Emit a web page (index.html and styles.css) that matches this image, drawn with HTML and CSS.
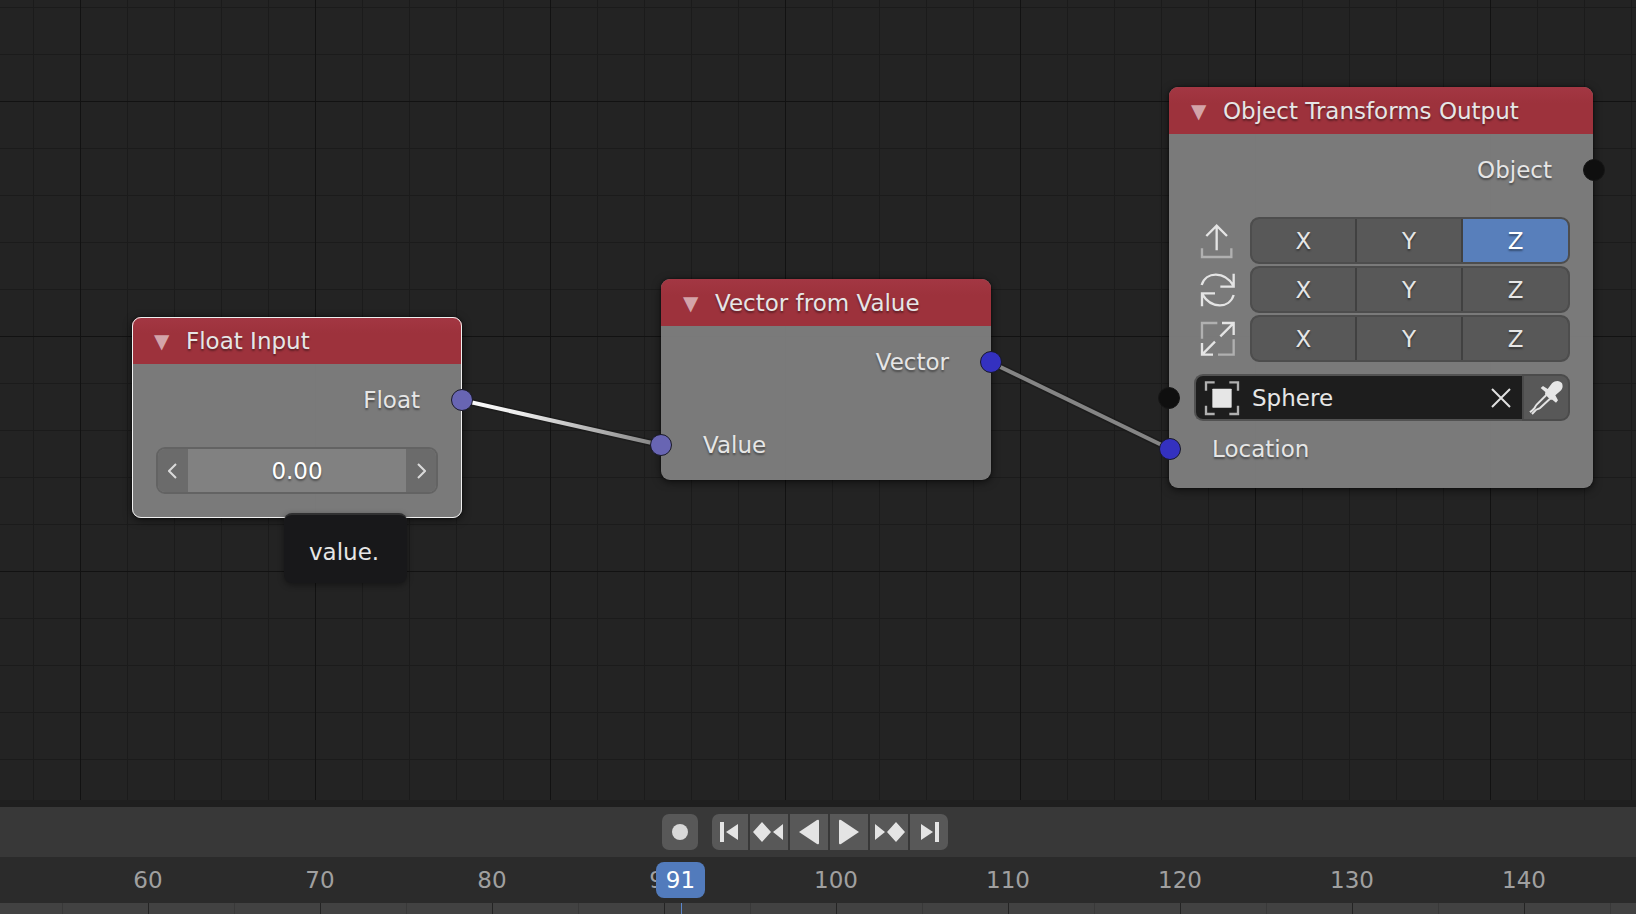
FILE: index.html
```html
<!DOCTYPE html>
<html lang="en">
<head>
<meta charset="utf-8">
<title>Node Editor</title>
<link rel="stylesheet" href="styles.css">
</head>
<body>
<main class="canvas">
  <svg class="links" aria-hidden="true">
    <defs>
      <linearGradient id="active" gradientUnits="userSpaceOnUse" x1="461" y1="400" x2="661" y2="445">
        <stop offset="0" stop-color="#fff"/><stop offset=".3" stop-color="#ececec"/><stop offset="1" stop-color="#808080"/>
      </linearGradient>
    </defs>
    <path class="link-edge" d="M461 400L661 445M990 362L1170 449"/>
    <path class="link" stroke="url(#active)" d="M461 400L661 445"/>
    <path class="link link-idle" d="M990 362L1170 449"/>
  </svg>

  <section class="node node-float selected">
    <h2 class="node-header"><span class="collapse">▼</span>Float Input</h2>
    <div class="node-body">
      <div class="socket-row output"><label for="float-value">Float</label><span class="socket float"></span></div>
      <div class="number-field">
        <button class="step" aria-label="Decrease"><svg viewBox="0 0 10 16"><path d="M8 1L1 8L8 15"/></svg></button>
        <input id="float-value" class="number" type="text" value="0.00">
        <button class="step" aria-label="Increase"><svg viewBox="0 0 10 16"><path d="M2 1L9 8L2 15"/></svg></button>
      </div>
    </div>
  </section>

  <section class="node node-vector">
    <h2 class="node-header"><span class="collapse">▼</span>Vector from Value</h2>
    <div class="node-body">
      <div class="socket-row output">Vector<span class="socket vector"></span></div>
      <div class="socket-row input">Value<span class="socket float"></span></div>
    </div>
  </section>

  <section class="node node-output">
    <h2 class="node-header"><span class="collapse">▼</span>Object Transforms Output</h2>
    <div class="node-body">
      <div class="socket-row output">Object<span class="socket object"></span></div>
      <div class="channels">
        <div class="channel">
          <svg class="icon" viewBox="60 52 108 108"><path class="dim" d="M66 128V154H154V128"/><path d="M110 134V60M79 91L110 60L141 91"/></svg>
          <div class="axes"><button>X</button><button>Y</button><button class="on">Z</button></div>
        </div>
        <div class="channel">
          <svg class="icon" viewBox="60 199 108 108"><path d="M65 238C78 197 134 196 160 240M161 204V243H121M66 302V263H105M67 266C93 309 148 310 161 268"/></svg>
          <div class="axes"><button>X</button><button>Y</button><button>Z</button></div>
        </div>
        <div class="channel">
          <svg class="icon" viewBox="60 346 108 108"><path class="dim" d="M66 399V352H112M161 401V447H114"/><path d="M121 392L160 353M126 352H161V388M105 408L67 446M66 412V447H99"/></svg>
          <div class="axes"><button>X</button><button>Y</button><button>Z</button></div>
        </div>
      </div>
      <div class="object-row">
        <span class="socket object"></span>
        <div class="object-field">
          <svg class="icon" viewBox="163 328 108 108"><path class="dim" d="M169 360V335H195M239 335H265V360M265 405V430H239M195 430H169V405"/><rect x="188" y="354" width="58" height="57" rx="2"/></svg>
          <input class="object-name" type="text" value="Sphere" aria-label="Object">
          <button class="clear" aria-label="Clear"><svg viewBox="0 0 20 20"><path d="M1 1L19 19M19 1L1 19"/></svg></button>
        </div>
        <button class="picker" aria-label="Pick object">
          <svg class="icon" viewBox="84 58 108 108"><path class="solid" d="M122 82L129 76L143 85L156 68C167 57 181 60 186 68C190 78 187 85 180 92L166 104L174 119L168 126L157 117L151 117L135 101L136 94Z"/><path class="thin" d="M139 103L110 132C104 138 107 141 99 147L90 155M150 114L120 142C114 147 109 144 105 151L96 160"/></svg>
        </button>
      </div>
      <div class="socket-row input">Location<span class="socket vector"></span></div>
    </div>
  </section>

  <div class="tooltip" role="tooltip">value.</div>
</main>

<footer class="timeline">
  <div class="transport">
    <button class="record" aria-label="Auto keying"><svg viewBox="0 0 36 36"><circle cx="18" cy="18" r="8"/></svg></button>
    <div class="playback">
      <button aria-label="Jump to start"><svg viewBox="0 0 36 36"><path d="M8 8h4v20h-4zM14 18L26 10V26Z"/></svg></button>
      <button aria-label="Previous keyframe"><svg viewBox="0 0 36 36"><path d="M2 18L11 8L20 18L11 28ZM22 18L32 10V26Z"/></svg></button>
      <button aria-label="Play reversed"><svg viewBox="0 0 36 36"><path d="M8 18L26 6Q28 5 28 7V29Q28 31 26 30Z"/></svg></button>
      <button aria-label="Play"><svg viewBox="0 0 36 36"><path d="M28 18L10 6Q8 5 8 7V29Q8 31 10 30Z"/></svg></button>
      <button aria-label="Next keyframe"><svg viewBox="0 0 36 36"><path d="M34 18L25 8L16 18L25 28ZM14 18L4 10V26Z"/></svg></button>
      <button aria-label="Jump to end"><svg viewBox="0 0 36 36"><path d="M24 8h4v20h-4zM22 18L10 10V26Z"/></svg></button>
    </div>
  </div>
  <div class="frames">
    <div class="ruler"><span>60</span><span>70</span><span>80</span><span>90</span><span>100</span><span>110</span><span>120</span><span>130</span><span>140</span></div>
    <div class="track"></div>
    <div class="playhead">91</div>
  </div>
</footer>
</body>
</html>
```
FILE: styles.css
```css
* { box-sizing: border-box; }

body {
  margin: 0;
  height: 100vh;
  display: flex;
  flex-direction: column;
  overflow: hidden;
  background: #1f1f1f;
  color: #e6e6e6;
  font: 23px/28px "DejaVu Sans", sans-serif;
}

button, input {
  margin: 0;
  padding: 0;
  border: 0;
  border-radius: 0;
  background: none;
  color: inherit;
  font: inherit;
  text-shadow: inherit;
}

svg { display: block; }

/* Node canvas */
.canvas {
  position: relative;
  flex: 1;
  overflow: hidden;
  background-color: #232323;
  background-image:
    linear-gradient(90deg, #121212 1px, transparent 1px),
    linear-gradient(#121212 1px, transparent 1px),
    linear-gradient(90deg, #1b1b1b 1px, transparent 1px),
    linear-gradient(#1b1b1b 1px, transparent 1px);
  background-size: 235px 235px, 235px 235px, 47px 47px, 47px 47px;
  background-position: 80px 0, 0 101px, 33px 0, 0 7px;
}

.links {
  position: absolute;
  inset: 0;
  width: 100%;
  height: 100%;
  z-index: 1;
  fill: none;
}
.link { stroke-width: 4; }
.link-idle { stroke: #858585; }
.link-edge { stroke: #151515; stroke-width: 7; stroke-opacity: .5; }

.node {
  position: absolute;
  border-radius: 9px;
  background: rgba(128, 128, 128, .95);
  box-shadow: 0 2px 8px rgba(0, 0, 0, .6), 0 0 2px rgba(0, 0, 0, .6);
  text-shadow: 0 2px 2px rgba(0, 0, 0, .4);
}
.node-float { left: 132px; top: 317px; width: 330px; }
.node-vector { left: 661px; top: 279px; width: 330px; }
.node-output { left: 1169px; top: 87px; width: 424px; }
.selected { outline: 1px solid #f0f0f0; outline-offset: -1px; }

.node-header {
  display: flex;
  align-items: center;
  height: 47px;
  margin: 0;
  padding: 1px 0 0 22px;
  border-radius: 9px 9px 0 0;
  background: linear-gradient(#a33743, #9d323c 16px);
  font-size: inherit;
  font-weight: normal;
}
.collapse {
  width: 32px;
  font-size: 20px;
  color: #d3a4a9;
  text-shadow: none;
}

.node-body {
  display: flex;
  flex-direction: column;
  padding: 12px 24px;
}
.node-vector .node-body { gap: 36px; }
.node-float .node-body { gap: 24px; padding-bottom: 24px; }
.node-output .node-body { padding: 12px 23px 16px 25px; }

.socket-row {
  position: relative;
  display: flex;
  align-items: center;
  height: 47px;
  margin: 0 -24px;
  padding: 0 42px;
}
.output { justify-content: flex-end; }

.socket {
  position: absolute;
  z-index: 2;
  top: 13px;
  width: 22px;
  height: 22px;
  border: 1px solid #191928;
  border-radius: 50%;
}
.output .socket { right: -11px; }
.input .socket { left: -11px; }
.float { background: #6865b3; }
.vector { background: #3431c0; }
.object { background: #0f0f0f; border-color: #161616; }

.number-field {
  display: flex;
  height: 47px;
  border: 2px solid #636363;
  border-radius: 9px;
  overflow: hidden;
  background: #818181;
}
.step {
  display: grid;
  place-items: center;
  width: 30px;
  background: #6b6b6b;
}
.step svg {
  width: 10px;
  height: 16px;
  fill: none;
  stroke: #dadada;
  stroke-width: 2;
}
.number {
  flex: 1;
  min-width: 0;
  text-align: center;
  color: #fff;
}

.channels {
  display: grid;
  gap: 2px;
  margin: 24px 0 12px;
}
.channel {
  display: grid;
  grid-template-columns: 48px 1fr;
  gap: 8px;
  align-items: center;
}
.icon {
  width: 36px;
  height: 36px;
  fill: none;
  stroke: #e4e4e4;
  stroke-width: 7;
}
.channel .icon { justify-self: center; }
.icon .dim { stroke: #b0b0b0; }
.icon rect, .icon .solid { fill: #e6e6e6; stroke: none; }
.icon .thin { stroke-width: 6; }

.axes {
  display: grid;
  grid-template-columns: 51fr 52fr 52fr;
  gap: 2px;
  height: 47px;
  border: 2px solid #4d4d4d;
  border-radius: 9px;
  overflow: hidden;
  background: #414141;
}
.axes button { background: #585858; }
.axes .on { background: #587fbb; color: #fff; }

.object-row {
  position: relative;
  display: flex;
  height: 47px;
  margin-bottom: 4px;
}
.object-row .socket { left: -36px; }
.object-field {
  flex: 1;
  min-width: 0;
  display: flex;
  align-items: center;
  padding: 0 11px 0 8px;
  border: 2px solid #525252;
  border-right: 0;
  border-radius: 9px 0 0 9px;
  background: #1d1d1d;
  text-shadow: none;
}
.object-name {
  flex: 1;
  min-width: 0;
  padding-left: 12px;
}
.clear svg {
  width: 20px;
  height: 20px;
  stroke: #e0e0e0;
  stroke-width: 2;
}
.picker {
  display: grid;
  place-items: center;
  width: 48px;
  border: 2px solid #4b4b4b;
  border-radius: 0 9px 9px 0;
  background: #585858;
}

.tooltip {
  position: absolute;
  z-index: 3;
  left: 284px;
  top: 513px;
  padding: 23px 28px 17px 25px;
  border-top: 2px solid #303031;
  border-radius: 8px;
  background: #18181a;
  box-shadow: 0 2px 6px rgba(0, 0, 0, .4);
}

/* Timeline */
.timeline { margin-top: 7px; }
.transport {
  display: flex;
  justify-content: center;
  gap: 14px;
  padding: 7px 26px 7px 0;
  background: #383838;
}
.transport button {
  height: 36px;
  display: grid;
  place-items: center;
  background: #585858;
}
.transport svg { width: 36px; height: 36px; fill: #e4e4e4; }
.transport .record { width: 36px; border-radius: 7px; }
.record svg { fill: #d8d8d8; }
.playback {
  display: flex;
  gap: 2px;
  border-radius: 7px;
  overflow: hidden;
}
.playback button { width: 38px; }
.playback button:first-child { width: 36px; }

.frames { position: relative; overflow: hidden; }
.ruler {
  display: flex;
  height: 46px;
  padding-left: 62px;
  align-items: center;
  background: #2b2b2b;
  color: #a0a0a0;
}
.ruler span {
  flex: 0 0 172px;
  text-align: center;
}
.track {
  height: 11px;
  background-color: #424242;
  background-image:
    linear-gradient(90deg, #242424 1px, transparent 1px),
    linear-gradient(90deg, #393939 1px, transparent 1px);
  background-size: 172px 100%;
  background-position: 148px 0, 62px 0;
}
.playhead {
  position: absolute;
  left: 656px;
  top: 5px;
  width: 49px;
  height: 36px;
  border-radius: 8px;
  background: #527bbc;
  color: #fff;
  line-height: 36px;
  text-align: center;
}
.playhead::after {
  content: "";
  position: absolute;
  left: 25px;
  top: 41px;
  width: 1px;
  height: 11px;
  background: #5a86cc;
}
```
